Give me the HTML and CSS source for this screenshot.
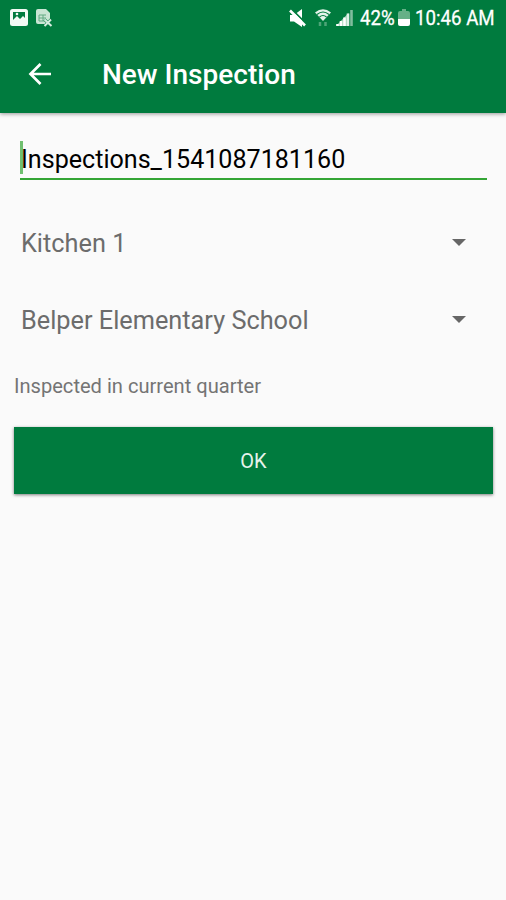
FILE: index.html
```html
<!DOCTYPE html>
<html lang="en">

<head>
    <meta charset="UTF-8">
    <meta name="viewport" content="width=device-width, initial-scale=1.0">
    <title>New Inspection</title>
    <link rel="stylesheet" href="styles.css">
</head>

<body>
    <header class="header">
        <div class="status-bar">
            <div class="status-left">
                <!-- Picture icon -->
                <svg width="18" height="17" viewBox="0 0 18 17">
                    <rect width="18" height="17" rx="2.5" fill="#f2faf4" />
                    <path d="M3 3h12v6l-2-2-3 3-3-3-4 4z" fill="#007b3e" />
                    <circle cx="7" cy="5" r="1.3" fill="#f2faf4" />
                </svg>
                <!-- Document icon -->
                <svg width="17" height="18" viewBox="0 0 17 18">
                    <path d="M2 0h8l4 4v6l-2 5H2a2 2 0 0 1-2-2V2a2 2 0 0 1 2-2z" fill="#c9e5d4" />
                    <path d="M3 6h7M3 9h7M3 12h6M3 6v6M7 6v6" stroke="#63aa83" fill="none" />
                    <path d="M8.500 10.500l7 6.500M15 10.500L8.500 17" stroke="#007b3e" stroke-width="3" />
                    <path d="M8.500 10.500l7 6.500M15 10.500L8.500 17" stroke="#d5ecdf" stroke-width="2" />
                </svg>
            </div>
            <div class="status-right">
                <!-- Sound off -->
                <svg class="icon-mute" width="17" height="18" viewBox="0 0 17 18">
                    <path d="M1 6h4l8-6v18l-8-5.500H1z" fill="#fff" />
                    <path d="M2.500 0L18 15.500" stroke="#007b3e" stroke-width="1.800" />
                    <path d="M1 1.500l15 15" stroke="#fff" stroke-width="2.600" />
                </svg>
                <!-- Wifi -->
                <svg class="icon-wifi" width="16" height="18" viewBox="0 0 16 18">
                    <path d="M0 3.500Q8-3 16 3.500L8 12z" fill="#e4f3ea" />
                    <path d="M2 5.500Q8 .5 14 5.500M4.500 8Q8 5 11.500 8" fill="none" stroke="#007b3e" stroke-width="1.200" />
                    <path d="M5 13v4M10.500 13v4" stroke="#4da477" stroke-width="2.500" />
                </svg>
                <!-- Signal bars -->
                <svg class="icon-signal" width="17" height="17" viewBox="0 0 17 17">
                    <path d="M0 17L12.500 4v13z" fill="#9fcfb4" />
                    <path d="M1.500 15v2M5 12v5M8.500 8.500V17" stroke="#fff" stroke-width="2.600" />
                    <path d="M12 4.500V17" stroke="#e0f1e7" stroke-width="2.600" />
                    <path d="M15.500 1v16" stroke="#80bd9d" stroke-width="2.600" />
                </svg>
                <span class="battery-text">42%</span>
                <!-- Battery -->
                <svg class="icon-battery" width="12" height="17" viewBox="0 0 12 17">
                    <path d="M4 0h4v2h2a2 2 0 0 1 2 2v6H0V4a2 2 0 0 1 2-2h2z" fill="#66b087" />
                    <path d="M0 10h12v5a2 2 0 0 1-2 2H2a2 2 0 0 1-2-2z" fill="#fff" />
                </svg>
                <span class="clock">10:46 AM</span>
            </div>
        </div>
        <div class="toolbar">
            <svg class="back" width="24" height="24" viewBox="0 0 24 24">
                <path d="M23 12H3M12.500 2L2.500 12l10 10" fill="none" stroke="#fff" stroke-width="2.700" />
            </svg>
            <h1>New Inspection</h1>
        </div>
    </header>

    <main class="form">
        <div class="name-field"><span class="cursor"></span>Inspections_1541087181160</div>
        <div class="spinner">
            <span>Kitchen 1</span>
            <svg width="14" height="7" viewBox="0 0 14 7"><path d="M0 0h14L7 7z" fill="#666" /></svg>
        </div>
        <div class="spinner">
            <span>Belper Elementary School</span>
            <svg width="14" height="7" viewBox="0 0 14 7"><path d="M0 0h14L7 7z" fill="#666" /></svg>
        </div>
        <p class="note">Inspected in current quarter</p>
        <button type="button" class="ok">OK</button>
    </main>
</body>

</html>
```

FILE: styles.css
```css
body {
    margin: 0;
    min-height: 900px;
    background-color: #fafafa;
    font-family: Roboto, "Liberation Sans", sans-serif;
}

.header {
    height: 113px;
    background-color: #007b3e;
    color: white;
    box-shadow: 0 1px 4px rgba(0, 0, 0, 0.4);
}

.status-bar {
    display: flex;
    justify-content: space-between;
    height: 35px;
    box-sizing: border-box;
    padding: 0 10px 0 10px;
}

.status-left {
    display: flex;
    align-items: center;
    gap: 8px;
}

.status-right {
    display: flex;
    align-items: center;
    font-size: 21px;
}

.icon-mute {
    margin-right: 9px;
}

.icon-wifi {
    margin-right: 5px;
}

.icon-signal {
    margin-right: 7px;
}

/* The status texts are narrower than the regular face */
.battery-text,
.clock {
    white-space: nowrap;
    transform: scaleX(0.89);
    transform-origin: left;
    -webkit-text-stroke: 0.3px white;
}

.battery-text {
    width: 38px;
}

.icon-battery {
    margin-right: 5px;
}

.clock {
    width: 81px;
}

.toolbar {
    display: flex;
    align-items: center;
    height: 78px;
    padding-left: 28px;
}

.back {
    margin-right: 50px;
}

.toolbar h1 {
    margin: 0;
    padding-top: 2px;
    font-size: 28px;
    font-weight: 500;
    line-height: 36px;
}

.form {
    padding: 24px 13px 0 14px;
}

.name-field {
    position: relative;
    height: 43px;
    margin: 0 6px;
    padding-left: 1px;
    box-sizing: border-box;
    border-bottom: 2px solid #34a535;
    font-size: 25.1px;
    line-height: 45px;
}

/* Text caret */
.cursor {
    position: absolute;
    left: 0;
    top: 4px;
    width: 3px;
    height: 33px;
    background-color: rgba(52, 165, 53, 0.7);
}

.spinner {
    display: flex;
    align-items: center;
    justify-content: space-between;
    height: 77px;
    padding: 0 27px 0 7px;
    color: #6c6c6c;
    font-size: 25.3px;
}

.spinner span {
    padding-top: 2px;
}

.name-field + .spinner {
    margin-top: 24px;
}

.note {
    margin: 16px 0 29px;
    color: #747474;
    font-size: 20.1px;
    line-height: 24px;
}

.ok {
    display: block;
    width: 100%;
    height: 67px;
    padding: 1px 0 0;
    border: none;
    background-color: #007b3e;
    color: #e6f3eb;
    font-family: inherit;
    font-size: 20px;
    box-shadow: 0 1px 3px rgba(0, 0, 0, 0.5);
}
```
